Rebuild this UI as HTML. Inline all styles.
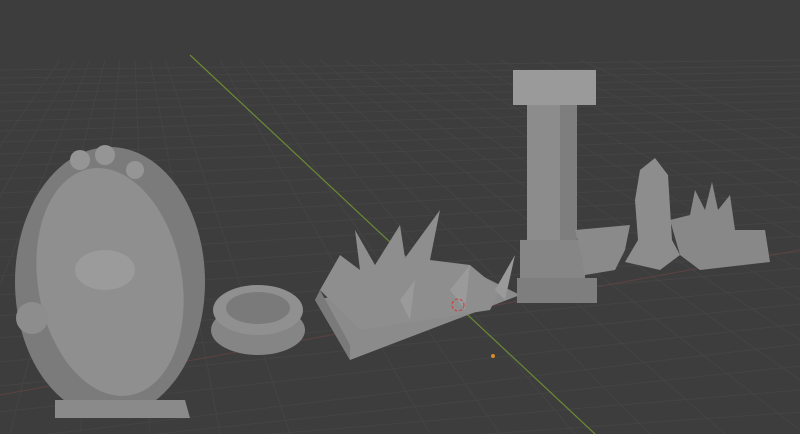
<!DOCTYPE html>
<html><head><style>
html,body{margin:0;padding:0;background:#3d3d3d;overflow:hidden}
svg{display:block}
</style></head><body>
<svg width="800" height="434" viewBox="0 0 800 434" xmlns="http://www.w3.org/2000/svg">
<rect width="800" height="434" fill="#3d3d3d"/>
<g stroke="#444444" stroke-width="1">
<line x1="0" y1="70" x2="800" y2="60"/>
<line x1="0" y1="78" x2="800" y2="66"/>
<line x1="0" y1="85" x2="800" y2="72"/>
<line x1="0" y1="93" x2="800" y2="79"/>
<line x1="0" y1="102" x2="800" y2="86"/>
<line x1="0" y1="111" x2="800" y2="93"/>
<line x1="0" y1="121" x2="800" y2="101"/>
<line x1="0" y1="131" x2="800" y2="109"/>
<line x1="0" y1="142" x2="800" y2="118"/>
<line x1="0" y1="154" x2="800" y2="127"/>
<line x1="0" y1="166" x2="800" y2="137"/>
<line x1="0" y1="179" x2="800" y2="147"/>
<line x1="0" y1="193" x2="800" y2="158"/>
<line x1="0" y1="208" x2="800" y2="169"/>
<line x1="0" y1="223" x2="800" y2="181"/>
<line x1="0" y1="240" x2="800" y2="194"/>
<line x1="0" y1="257" x2="800" y2="207"/>
<line x1="0" y1="276" x2="800" y2="221"/>
<line x1="0" y1="295" x2="800" y2="236"/>
<line x1="0" y1="316" x2="800" y2="252"/>
<line x1="0" y1="338" x2="800" y2="268"/>
<line x1="0" y1="362" x2="800" y2="286"/>
<line x1="0" y1="386" x2="800" y2="304"/>
<line x1="0" y1="412" x2="800" y2="324"/>
<line x1="0" y1="440" x2="800" y2="344"/>
<line x1="100" y1="440" x2="800" y2="366"/>
<line x1="200" y1="440" x2="800" y2="390"/>
<line x1="400" y1="440" x2="800" y2="412"/>
<line x1="60" y1="60" x2="-200" y2="434"/>
<line x1="75" y1="60" x2="-130" y2="434"/>
<line x1="90" y1="60" x2="-60" y2="434"/>
<line x1="105" y1="60" x2="10" y2="434"/>
<line x1="120" y1="60" x2="80" y2="434"/>
<line x1="135" y1="60" x2="150" y2="434"/>
<line x1="150" y1="60" x2="220" y2="434"/>
<line x1="165" y1="60" x2="290" y2="434"/>
<line x1="220" y1="60" x2="430" y2="434"/>
<line x1="240" y1="60" x2="500" y2="434"/>
<line x1="260" y1="60" x2="575" y2="434"/>
<line x1="280" y1="60" x2="650" y2="434"/>
<line x1="300" y1="60" x2="725" y2="434"/>
<line x1="320" y1="60" x2="800" y2="430"/>
<line x1="345" y1="60" x2="800" y2="380"/>
<line x1="370" y1="60" x2="800" y2="340"/>
<line x1="400" y1="60" x2="800" y2="300"/>
<line x1="430" y1="60" x2="800" y2="270"/>
<line x1="465" y1="60" x2="800" y2="238"/>
<line x1="500" y1="60" x2="800" y2="210"/>
<line x1="540" y1="60" x2="800" y2="185"/>
<line x1="580" y1="60" x2="800" y2="160"/>
<line x1="630" y1="60" x2="800" y2="138"/>
</g>
<line x1="190" y1="55" x2="595" y2="434" stroke="#6a8a34" stroke-width="1.2"/>
<line x1="0" y1="395" x2="800" y2="250" stroke="#5e4242" stroke-width="1"/>
<!-- mirror -->
<ellipse cx="110" cy="282" rx="95" ry="135" fill="#7b7b7b"/>
<ellipse cx="110" cy="282" rx="72" ry="115" fill="#8f8f8f" transform="rotate(-10 110 282)"/>
<ellipse cx="105" cy="270" rx="30" ry="20" fill="#9b9b9b"/>
<path d="M55 400 L185 400 L190 418 L55 418 Z" fill="#8a8a8a"/>
<circle cx="32" cy="318" r="16" fill="#8d8d8d"/>
<circle cx="80" cy="160" r="10" fill="#959595"/>
<circle cx="105" cy="155" r="10" fill="#959595"/>
<circle cx="135" cy="170" r="9" fill="#959595"/>
<!-- disc -->
<ellipse cx="258" cy="330" rx="47" ry="25" fill="#858585"/>
<ellipse cx="258" cy="310" rx="45" ry="25" fill="#909090"/>
<ellipse cx="258" cy="308" rx="32" ry="16" fill="#7a7a7a"/>
<!-- spiky bed -->
<path d="M315 300 L470 270 L520 295 L350 360 Z" fill="#8b8b8b"/>
<path d="M315 300 L350 360 L350 345 L320 290 Z" fill="#7a7a7a"/>
<path d="M320 290 L340 255 L360 270 L355 230 L375 265 L400 225 L405 258 L440 210 L430 260 L470 265 L500 290 L490 310 L360 330 Z" fill="#8e8e8e"/>
<path d="M400 300 L415 280 L410 320 Z M450 290 L470 265 L465 310 Z M495 290 L515 255 L505 300 Z" fill="#9a9a9a"/>
<!-- pillar -->
<rect x="513" y="70" width="83" height="35" fill="#9a9a9a"/>
<rect x="527" y="105" width="50" height="150" fill="#8c8c8c"/>
<rect x="560" y="105" width="17" height="150" fill="#7e7e7e"/>
<rect x="520" y="240" width="65" height="40" fill="#868686"/>
<rect x="517" y="278" width="80" height="25" fill="#7e7e7e"/>
<!-- anvil -->
<path d="M575 230 L630 225 L625 250 L615 270 L585 275 L580 250 Z" fill="#8a8a8a"/>
<!-- statue -->
<path d="M640 170 L655 158 L668 175 L672 240 L680 255 L660 270 L625 262 L638 240 L635 200 Z" fill="#8d8d8d"/>
<!-- spikes group -->
<path d="M670 220 L690 215 L695 190 L705 210 L712 182 L718 210 L730 195 L735 230 L765 230 L770 262 L700 270 L680 255 Z" fill="#888888"/>
<circle cx="493" cy="356" r="2" fill="#d98a2a"/>
<circle cx="458" cy="305" r="6" fill="none" stroke="#c44" stroke-width="1.2" stroke-dasharray="3 2"/>
</svg>
</body></html>
